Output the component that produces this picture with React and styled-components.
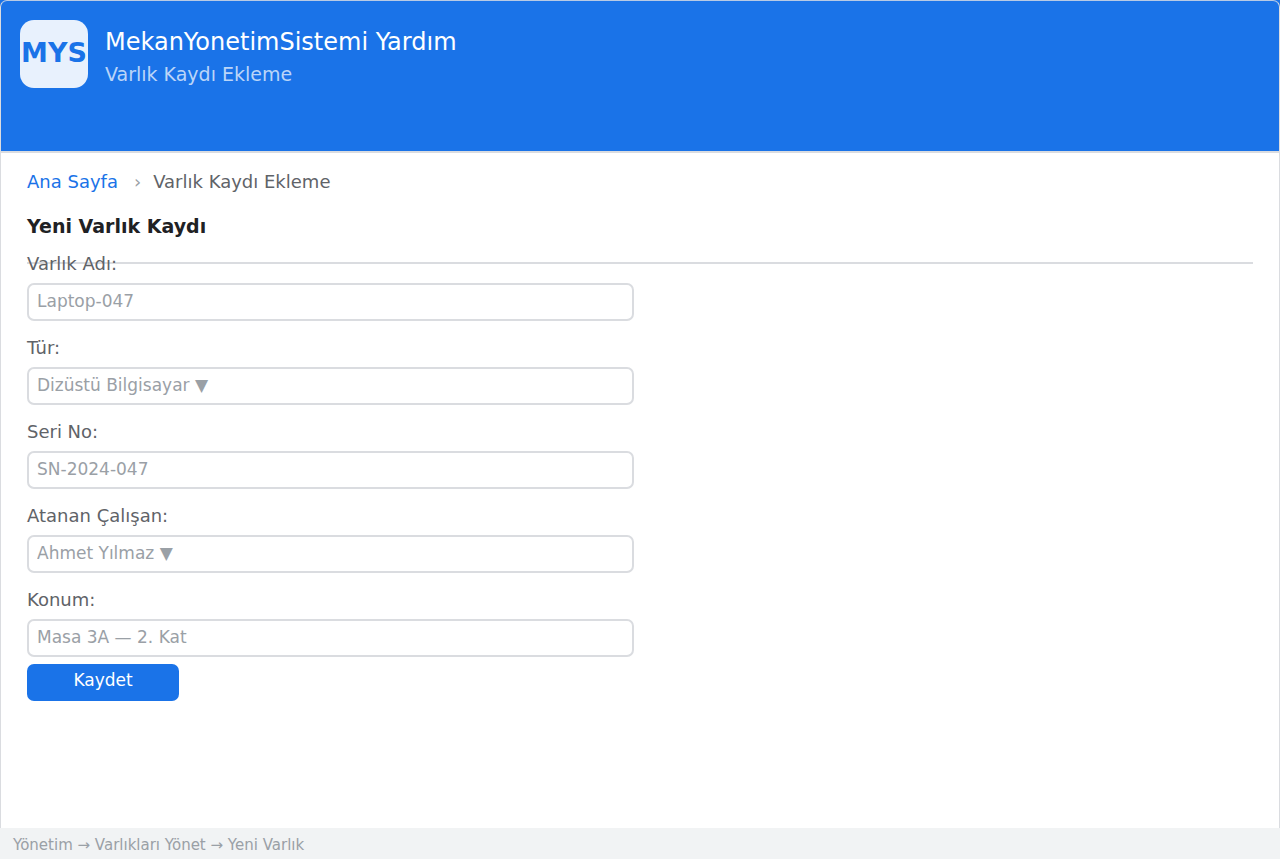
import styled, { createGlobalStyle } from "styled-components";

const GlobalStyle = createGlobalStyle`
  * {
    box-sizing: border-box;
  }
  body {
    margin: 0;
    background: #ffffff;
    font-family: "DejaVu Sans", sans-serif;
  }
`;

const Page = styled.div`
  position: relative;
  display: flex;
  flex-direction: column;
  min-height: 100vh;
  &::after {
    content: "";
    position: absolute;
    inset: 0;
    border: 1px solid #dadce0;
    border-top-color: #b8cae4;
    border-radius: 7px;
    pointer-events: none;
  }
`;

const Header = styled.header`
  display: flex;
  align-items: flex-start;
  gap: 17px;
  min-height: 153px;
  padding: 20px;
  background: #1a73e8;
  border-bottom: 2px solid #dadce0;
`;

const Logo = styled.div`
  display: flex;
  justify-content: center;
  align-items: center;
  width: 68px;
  height: 68px;
  padding-bottom: 4px;
  border-radius: 14px;
  background: #e8f1fd;
  color: #1a73e8;
  font-size: 27px;
  font-weight: 700;
`;

const Titles = styled.div`
  padding-top: 6px;
`;

const Title = styled.h1`
  margin: 0;
  color: #ffffff;
  font-size: 24px;
  font-weight: 400;
  line-height: 32px;
`;

const Subtitle = styled.p`
  margin: 0;
  color: #bad5f8;
  font-size: 19px;
  line-height: 32px;
`;

const Main = styled.main`
  flex: 1;
  padding: 17px 27px;
`;

const Breadcrumb = styled.nav`
  display: flex;
  align-items: center;
  font-size: 18px;
  line-height: 24px;
  color: #5f6368;
  a {
    color: #1a73e8;
    text-decoration: none;
  }
`;

const Separator = styled.span`
  margin: 0 12px 0 16px;
  color: #9aa0a6;
`;

const SectionTitle = styled.h2`
  margin: 0;
  padding: 20px 0 24px;
  border-bottom: 2px solid #dadce0;
  color: #202124;
  font-size: 19px;
  font-weight: 700;
  line-height: 24px;
`;

/* the first label sits on the divider of the section title */
const Form = styled.form`
  position: relative;
  max-width: 607px;
  margin-top: -11px;
`;

const Field = styled.div`
  display: flex;
  flex-direction: column;
  gap: 8px;
  margin-bottom: 16px;
  &:last-of-type {
    margin-bottom: 7px;
  }
`;

const Label = styled.label`
  color: #5f6368;
  font-size: 18px;
  line-height: 22px;
`;

const Input = styled.input`
  width: 100%;
  height: 38px;
  padding: 0 8px 3px;
  border: 2px solid #dadce0;
  border-radius: 7px;
  background: #ffffff;
  color: #9aa0a6;
  font-family: inherit;
  font-size: 17px;
  &::placeholder {
    color: #9aa0a6;
    opacity: 1;
  }
`;

const Select = styled(Input).attrs({ as: "select" })`
  appearance: none;
`;

const SaveButton = styled.button`
  display: block;
  width: 152px;
  height: 37px;
  padding: 0 0 5px;
  border: none;
  border-radius: 7px;
  background: #1a73e8;
  color: #ffffff;
  font-family: inherit;
  font-size: 17px;
`;

const Footer = styled.footer`
  position: relative;
  z-index: 1;
  padding: 5px 13px 2px;
  background: #f1f3f4;
  color: #9aa0a6;
  font-size: 15px;
  line-height: 24px;
`;

const fields = [
  { id: "name", label: "Varlık Adı:", value: "Laptop-047" },
  { id: "type", label: "Tür:", value: "Dizüstü Bilgisayar ▼", select: true },
  { id: "serial", label: "Seri No:", value: "SN-2024-047" },
  { id: "employee", label: "Atanan Çalışan:", value: "Ahmet Yılmaz ▼", select: true },
  { id: "location", label: "Konum:", value: "Masa 3A — 2. Kat" },
];

const App = () => {
  return (
    <>
      <GlobalStyle />
      <Page>
        <Header>
          <Logo>MYS</Logo>
          <Titles>
            <Title>MekanYonetimSistemi Yardım</Title>
            <Subtitle>Varlık Kaydı Ekleme</Subtitle>
          </Titles>
        </Header>
        <Main>
          <Breadcrumb>
            <a href="#home">Ana Sayfa</a>
            <Separator>›</Separator>
            <span>Varlık Kaydı Ekleme</span>
          </Breadcrumb>
          <SectionTitle>Yeni Varlık Kaydı</SectionTitle>
          <Form onSubmit={(e) => e.preventDefault()}>
            {fields.map((field) => (
              <Field key={field.id}>
                <Label htmlFor={field.id}>{field.label}</Label>
                {field.select ? (
                  <Select id={field.id}>
                    <option>{field.value}</option>
                  </Select>
                ) : (
                  <Input id={field.id} type="text" placeholder={field.value} />
                )}
              </Field>
            ))}
            <SaveButton type="submit">Kaydet</SaveButton>
          </Form>
        </Main>
        <Footer>Yönetim → Varlıkları Yönet → Yeni Varlık</Footer>
      </Page>
    </>
  );
};

export default App;
